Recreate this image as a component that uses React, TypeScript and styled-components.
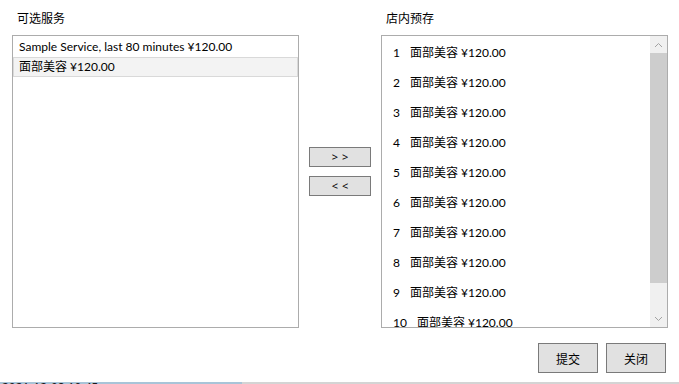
import React from 'react';
import styled, { createGlobalStyle } from 'styled-components';

const GlobalStyle = createGlobalStyle`
  html, body {
    margin: 0;
    padding: 0;
    background: #ffffff;
  }
  body {
    font-family: Lato, 'Noto Sans CJK SC', sans-serif;
    font-size: 12px;
    color: #000000;
  }
`;

const Window = styled.div`
  width: 679px;
  height: 384px;
  display: flex;
  flex-direction: column;
  overflow: hidden;
  background: #ffffff;
`;

const Main = styled.div`
  display: flex;
  flex-direction: row;
  padding: 10px 0 0 12px;
`;

const Column = styled.div`
  display: flex;
  flex-direction: column;
  width: 287px;
`;

const Label = styled.div`
  height: 25px;
  line-height: 18px;
  padding-left: 5px;
  font-size: 12px;
`;

const ListBox = styled.div`
  position: relative;
  height: 293px;
  box-sizing: border-box;
  border: 1px solid #acacac;
  display: flex;
  flex-direction: row;
  overflow: hidden;
`;

const Items = styled.div`
  flex: 1;
  display: flex;
  flex-direction: column;
  padding-top: 1px;
`;

interface IItem {
  selected?: boolean;
}

const Item = styled.div<IItem>`
  height: 20px;
  box-sizing: border-box;
  line-height: 17px;
  padding-left: 5px;
  white-space: nowrap;
  border: 1px solid ${(props) => (props.selected ? '#d9d9d9' : 'transparent')};
  background: ${(props) => (props.selected ? '#f3f3f3' : 'transparent')};
`;

const RankItems = styled.div`
  flex: 1;
  display: flex;
  flex-direction: column;
  padding: 2px 0 0 11px;
`;

const RankItem = styled.div`
  height: 30px;
  flex-shrink: 0;
  line-height: 30px;
  white-space: nowrap;
`;

const RankNo = styled.span`
  display: inline-block;
  margin-right: 10px;
`;

const ScrollBar = styled.div`
  width: 17px;
  display: flex;
  flex-direction: column;
  background: #f0f0f0;
`;

const ScrollArrow = styled.div`
  height: 17px;
  display: flex;
  align-items: center;
  justify-content: center;
`;

const ScrollTrack = styled.div`
  flex: 1;
  display: flex;
  flex-direction: column;
`;

const ScrollThumb = styled.div`
  height: 230px;
  background: #cdcdcd;
`;

const Middle = styled.div`
  width: 62px;
  margin: 0 10px;
  display: flex;
  flex-direction: column;
  gap: 9px;
  padding-top: 137px;
`;

const MoveButton = styled.button`
  width: 62px;
  height: 20px;
  padding: 0;
  box-sizing: border-box;
  border: 1px solid #7a7a7a;
  background: #e1e1e1;
  font-family: 'Noto Sans', sans-serif;
  font-size: 11px;
  line-height: 16px;
  color: #000000;
  word-spacing: 1px;
`;

const Footer = styled.div`
  display: flex;
  flex-direction: row;
  justify-content: flex-end;
  gap: 8px;
  padding: 15px 13px 0 0;
`;

const DialogButton = styled.button`
  width: 60px;
  height: 30px;
  padding: 0;
  box-sizing: border-box;
  border: 1px solid #7a7a7a;
  background: #e1e1e1;
  font-family: 'Noto Sans CJK SC', sans-serif;
  font-size: 12px;
  color: #000000;
`;

const Taskbar = styled.div`
  margin-top: 9px;
  height: 3px;
  display: flex;
  flex-direction: row;
  background: #d4d4d4;
  overflow: hidden;
`;

const TaskbarActive = styled.div`
  width: 240px;
  background: #a9c4d8;
  overflow: hidden;
  font-family: 'Noto Sans', sans-serif;
  font-size: 12px;
  line-height: 12px;
  padding-left: 2px;
  color: #1a1a1a;
  white-space: nowrap;
`;

const Chevron = ({ up }: { up?: boolean }) => (
  <svg width='9' height='6' viewBox='0 0 9 6'>
    <path
      d={up ? 'M1 5 L4.5 1.5 L8 5' : 'M1 1 L4.5 4.5 L8 1'}
      fill='none'
      stroke='#a3a3a3'
      strokeWidth='1'
    />
  </svg>
);

const services = ['Sample Service, last 80 minutes ¥120.00', '面部美容 ¥120.00'];
const stored = Array.from({ length: 10 }, (_, i) => ({ no: i + 1, name: '面部美容 ¥120.00' }));

export default function App() {
  return (
    <Window>
      <GlobalStyle />
      <Main>
        <Column>
          <Label>可选服务</Label>
          <ListBox>
            <Items>
              {services.map((s, i) => (
                <Item key={s} selected={i === 1}>
                  {s}
                </Item>
              ))}
            </Items>
          </ListBox>
        </Column>
        <Middle>
          <MoveButton>&gt; &gt;</MoveButton>
          <MoveButton>&lt; &lt;</MoveButton>
        </Middle>
        <Column>
          <Label>店内预存</Label>
          <ListBox>
            <RankItems>
              {stored.map((s) => (
                <RankItem key={s.no}>
                  <RankNo>{s.no}</RankNo>
                  {s.name}
                </RankItem>
              ))}
            </RankItems>
            <ScrollBar>
              <ScrollArrow>
                <Chevron up />
              </ScrollArrow>
              <ScrollTrack>
                <ScrollThumb />
              </ScrollTrack>
              <ScrollArrow>
                <Chevron />
              </ScrollArrow>
            </ScrollBar>
          </ListBox>
        </Column>
      </Main>
      <Footer>
        <DialogButton>提交</DialogButton>
        <DialogButton>关闭</DialogButton>
      </Footer>
      <Taskbar>
        <TaskbarActive>2021-12-08 10:45</TaskbarActive>
      </Taskbar>
    </Window>
  );
}
